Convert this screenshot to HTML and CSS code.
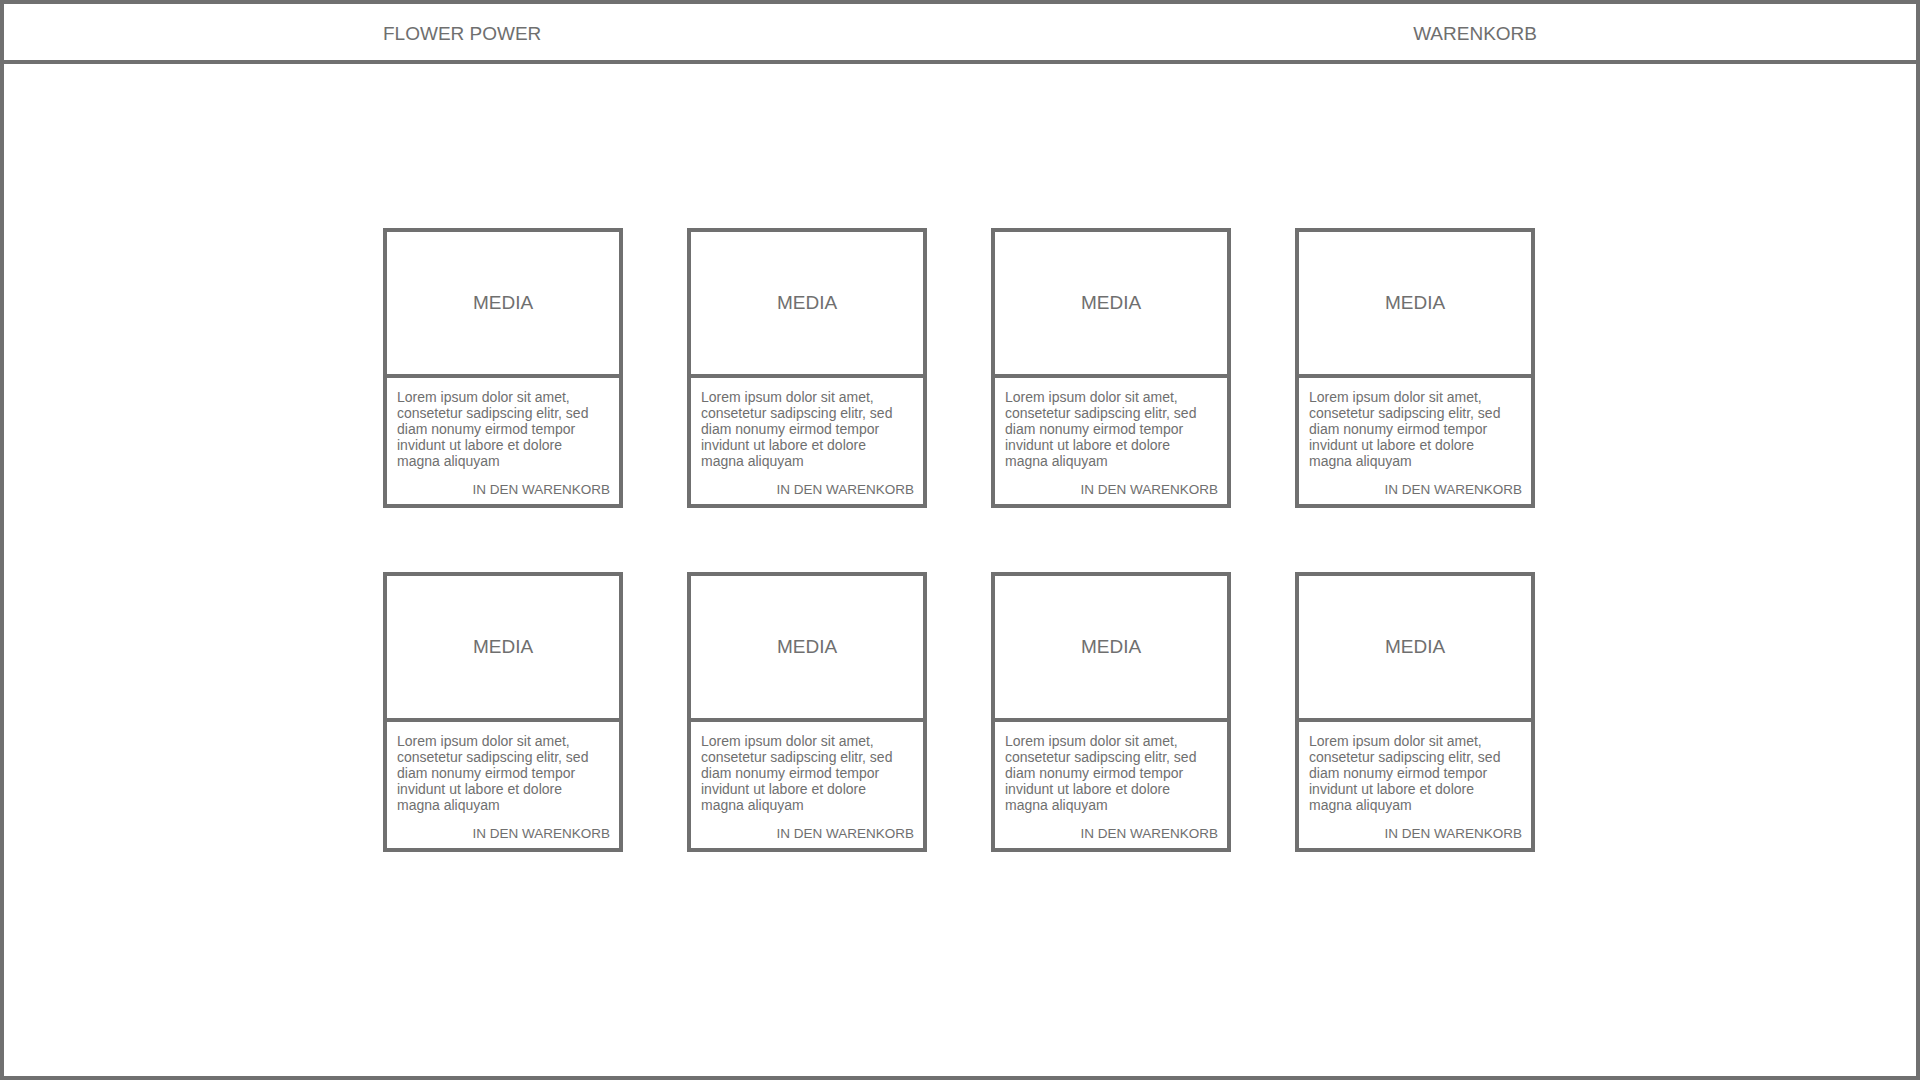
FILE: index.html
```html
<!DOCTYPE html>
<html lang="de">
<head>
  <meta charset="UTF-8">
  <title>Flower Power</title>
  <link rel="stylesheet" href="styles.css">
</head>
<body>
  <header class="topbar">
    <div class="topbar-inner">
      <span class="brand">FLOWER POWER</span>
      <span class="cart">WARENKORB</span>
    </div>
  </header>

  <main class="products">
    <div class="card">
      <div class="media">MEDIA</div>
      <div class="info">
        <p>Lorem ipsum dolor sit amet, consetetur sadipscing elitr, sed diam nonumy eirmod tempor invidunt ut labore et dolore magna aliquyam</p>
        <span class="add">IN DEN WARENKORB</span>
      </div>
    </div>
    <div class="card">
      <div class="media">MEDIA</div>
      <div class="info">
        <p>Lorem ipsum dolor sit amet, consetetur sadipscing elitr, sed diam nonumy eirmod tempor invidunt ut labore et dolore magna aliquyam</p>
        <span class="add">IN DEN WARENKORB</span>
      </div>
    </div>
    <div class="card">
      <div class="media">MEDIA</div>
      <div class="info">
        <p>Lorem ipsum dolor sit amet, consetetur sadipscing elitr, sed diam nonumy eirmod tempor invidunt ut labore et dolore magna aliquyam</p>
        <span class="add">IN DEN WARENKORB</span>
      </div>
    </div>
    <div class="card">
      <div class="media">MEDIA</div>
      <div class="info">
        <p>Lorem ipsum dolor sit amet, consetetur sadipscing elitr, sed diam nonumy eirmod tempor invidunt ut labore et dolore magna aliquyam</p>
        <span class="add">IN DEN WARENKORB</span>
      </div>
    </div>
    <div class="card">
      <div class="media">MEDIA</div>
      <div class="info">
        <p>Lorem ipsum dolor sit amet, consetetur sadipscing elitr, sed diam nonumy eirmod tempor invidunt ut labore et dolore magna aliquyam</p>
        <span class="add">IN DEN WARENKORB</span>
      </div>
    </div>
    <div class="card">
      <div class="media">MEDIA</div>
      <div class="info">
        <p>Lorem ipsum dolor sit amet, consetetur sadipscing elitr, sed diam nonumy eirmod tempor invidunt ut labore et dolore magna aliquyam</p>
        <span class="add">IN DEN WARENKORB</span>
      </div>
    </div>
    <div class="card">
      <div class="media">MEDIA</div>
      <div class="info">
        <p>Lorem ipsum dolor sit amet, consetetur sadipscing elitr, sed diam nonumy eirmod tempor invidunt ut labore et dolore magna aliquyam</p>
        <span class="add">IN DEN WARENKORB</span>
      </div>
    </div>
    <div class="card">
      <div class="media">MEDIA</div>
      <div class="info">
        <p>Lorem ipsum dolor sit amet, consetetur sadipscing elitr, sed diam nonumy eirmod tempor invidunt ut labore et dolore magna aliquyam</p>
        <span class="add">IN DEN WARENKORB</span>
      </div>
    </div>
  </main>
</body>
</html>
```

FILE: styles.css
```css
* {
  box-sizing: border-box;
}

body {
  margin: 0;
  height: 1080px;
  border: 4px solid #707070;
  background: white;
  color: #6f6f6f;
  font-family: "Liberation Sans", Arial, sans-serif;
}

.topbar {
  height: 60px;
  border-bottom: 4px solid #707070;
  padding-top: 19px;
}

.topbar-inner {
  width: 1154px;
  margin: 0 auto;
  display: flex;
  justify-content: space-between;
  font-size: 19px;
  line-height: 21px;
}

.products {
  width: 1154px;
  margin: 164px auto 0;
  display: grid;
  grid-template-columns: repeat(4, 240px);
  gap: 64px;
}

.card {
  height: 280px;
  border: 4px solid #707070;
  display: flex;
  flex-direction: column;
}

.media {
  height: 146px;
  border-bottom: 4px solid #707070;
  display: flex;
  justify-content: center;
  align-items: center;
  font-size: 19px;
}

.info {
  flex: 1;
  display: flex;
  flex-direction: column;
  padding: 11px 9px 6px 10px;
}

.info p {
  margin: 0;
  max-width: 200px;
  font-size: 14px;
  line-height: 16px;
}

.add {
  margin-top: auto;
  align-self: flex-end;
  font-size: 13.5px;
  line-height: 16px;
}
```
